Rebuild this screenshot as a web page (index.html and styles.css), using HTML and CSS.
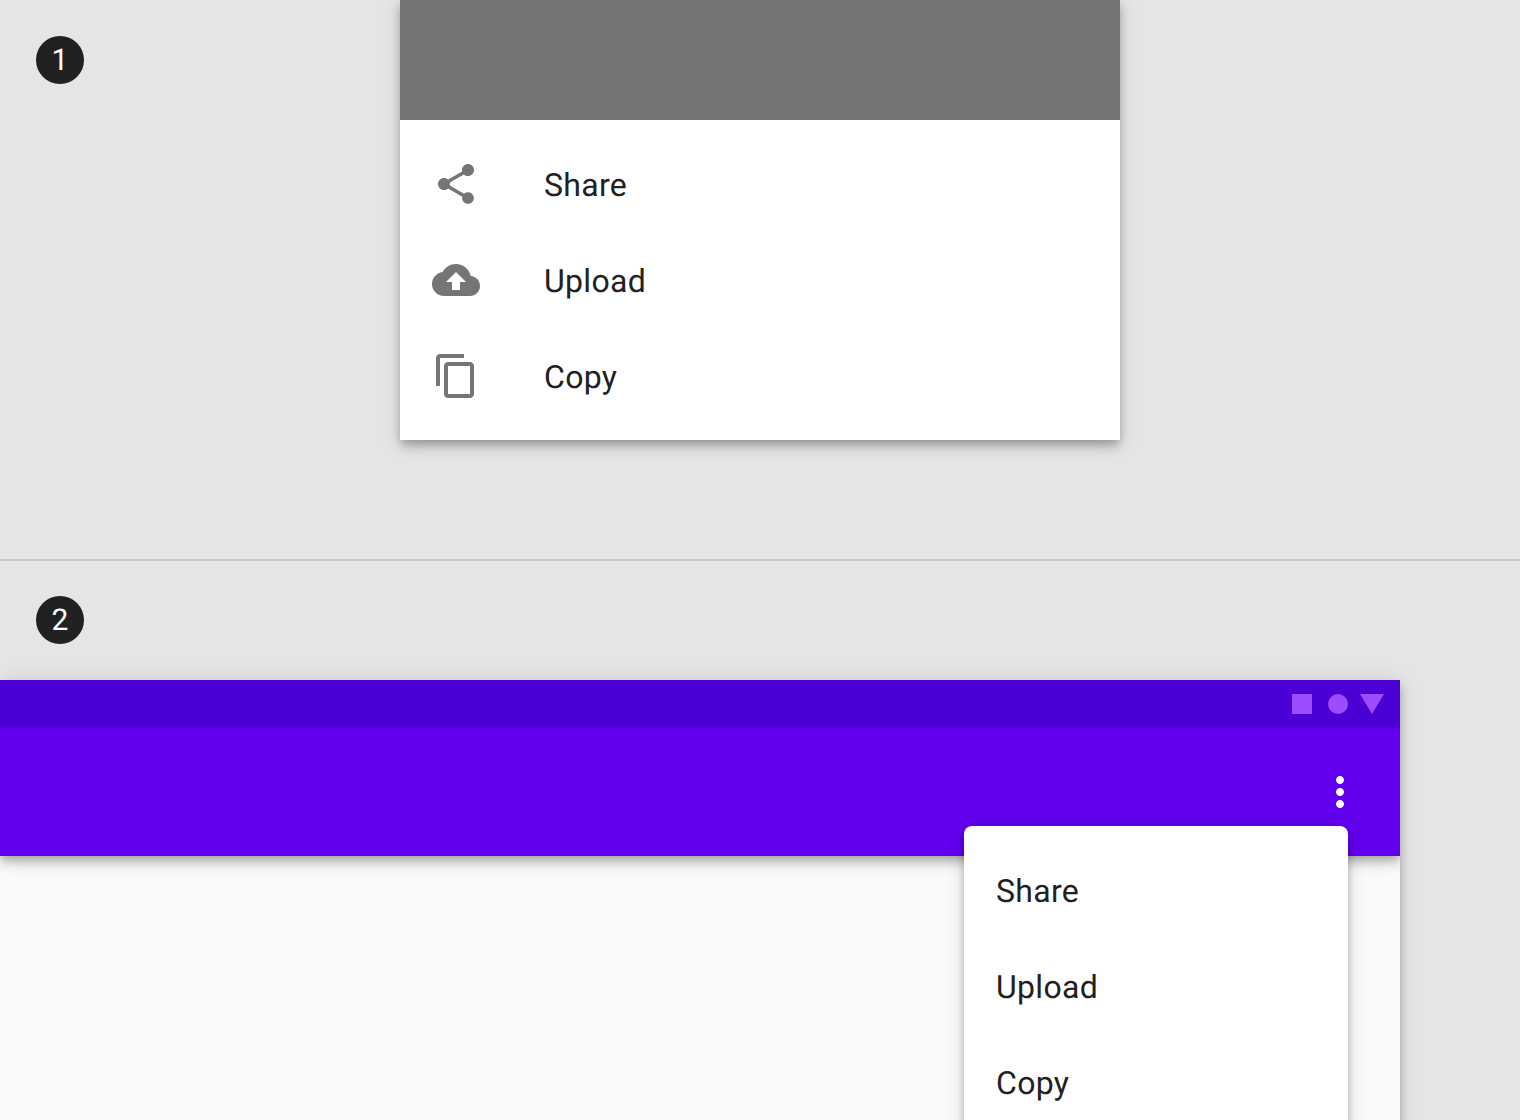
FILE: index.html
```html
<!DOCTYPE html>
<html lang="en">
<head>
<meta charset="utf-8">
<title>Menu</title>
<link rel="stylesheet" href="styles.css">
</head>
<body>
<main class="page">
  <section class="panel panel-one">
    <span class="badge">1</span>
    <div class="card">
      <div class="card-media"></div>
      <ul class="list">
        <li class="row">
          <svg class="icon" viewBox="0 0 24 24"><path d="M18 16.08c-.76 0-1.44.3-1.96.77L8.91 12.7c.05-.23.09-.46.09-.7s-.04-.47-.09-.7l7.05-4.11c.54.5 1.25.81 2.04.81 1.66 0 3-1.34 3-3s-1.34-3-3-3-3 1.34-3 3c0 .24.04.47.09.7L8.04 9.81C7.5 9.31 6.79 9 6 9c-1.66 0-3 1.34-3 3s1.34 3 3 3c.79 0 1.5-.31 2.04-.81l7.12 4.16c-.05.21-.08.43-.08.65 0 1.61 1.31 2.92 2.92 2.92 1.61 0 2.92-1.31 2.92-2.92s-1.31-2.92-2.92-2.92z"/></svg>
          <span class="label">Share</span>
        </li>
        <li class="row">
          <svg class="icon" viewBox="0 0 24 24"><path d="M19.35 10.04C18.67 6.59 15.64 4 12 4 9.11 4 6.6 5.64 5.35 8.04 2.34 8.36 0 10.91 0 14c0 3.31 2.69 6 6 6h13c2.76 0 5-2.24 5-5 0-2.64-2.05-4.78-4.65-4.96zM14 13v4h-4v-4H7l5-5 5 5h-3z"/></svg>
          <span class="label">Upload</span>
        </li>
        <li class="row">
          <svg class="icon" viewBox="0 0 24 24"><path d="M16 1H4c-1.1 0-2 .9-2 2v14h2V3h12V1zm3 4H8c-1.1 0-2 .9-2 2v14c0 1.1.9 2 2 2h11c1.1 0 2-.9 2-2V7c0-1.1-.9-2-2-2zm0 16H8V7h11v14z"/></svg>
          <span class="label">Copy</span>
        </li>
      </ul>
    </div>
  </section>
  <section class="panel panel-two">
    <span class="badge">2</span>
    <div class="device">
      <div class="status">
        <span class="st-square"></span>
        <span class="st-circle"></span>
        <svg class="st-triangle" viewBox="0 0 24 20"><path d="M0 0h24L12 20z"/></svg>
      </div>
      <div class="appbar">
        <svg class="more" viewBox="0 0 24 24"><path d="M12 8c1.1 0 2-.9 2-2s-.9-2-2-2-2 .9-2 2 .9 2 2 2zm0 2c-1.1 0-2 .9-2 2s.9 2 2 2 2-.9 2-2-.9-2-2-2zm0 6c-1.1 0-2 .9-2 2s.9 2 2 2 2-.9 2-2-.9-2-2-2z"/></svg>
      </div>
      <div class="content"></div>
      <ul class="menu">
        <li class="menu-item"><span class="label">Share</span></li>
        <li class="menu-item"><span class="label">Upload</span></li>
        <li class="menu-item"><span class="label">Copy</span></li>
      </ul>
    </div>
  </section>
</main>
</body>
</html>
```
FILE: styles.css
```css
* { box-sizing: border-box; }
html, body { margin: 0; padding: 0; }
body {
  width: 1520px;
  height: 1120px;
  overflow: hidden;
  background: #e5e5e5;
  font-family: Roboto, "Liberation Sans", sans-serif;
  color: #212121;
  text-rendering: geometricPrecision;
}
.page { display: flex; flex-direction: column; height: 1120px; }
ul { list-style: none; margin: 0; padding: 0; }

.panel { position: relative; }
.panel-one {
  height: 561px;
  display: flex;
  justify-content: center;
  border-bottom: 2px solid #c9c9c9;
}
.panel-two { flex: 1; min-height: 0; padding-top: 119px; overflow: hidden; }

.badge {
  position: absolute;
  left: 36px;
  top: 36px;
  width: 48px;
  height: 48px;
  border-radius: 50%;
  background: #212121;
  color: #fff;
  font-size: 30px;
  line-height: 50px;
  text-align: center;
}
.panel-two .badge { top: 35px; }

.card {
  width: 720px;
  height: 440px;
  background: #fff;
  box-shadow: 0 4px 8px -2px rgba(0, 0, 0, .2), 0 8px 10px rgba(0, 0, 0, .14), 0 2px 20px rgba(0, 0, 0, .12);
}
.card-media { height: 120px; background: #757575; }
.list { padding: 16px 0; }
.row { display: flex; align-items: center; height: 96px; padding-left: 32px; }
.icon { width: 48px; height: 48px; fill: #757575; flex: none; margin-right: 64px; }
.label { position: relative; top: 1px; font-size: 32px; line-height: 48px; letter-spacing: .32px; }

.device {
  position: relative;
  width: 1400px;
  height: 600px;
  display: flex;
  flex-direction: column;
  overflow: hidden;
  box-shadow: 0 4px 8px -2px rgba(0, 0, 0, .2), 0 8px 10px rgba(0, 0, 0, .14), 0 2px 20px rgba(0, 0, 0, .12);
}
.status {
  position: relative;
  z-index: 1;
  height: 48px;
  flex: none;
  display: flex;
  align-items: center;
  justify-content: flex-end;
  padding-right: 16px;
  background: #4b00d4;
}
.st-square { width: 20px; height: 20px; background: #9d4dff; margin-right: 16px; }
.st-circle { width: 20px; height: 20px; border-radius: 50%; background: #9d4dff; margin-right: 12px; }
.st-triangle { width: 24px; height: 20px; fill: #9d4dff; }
.appbar {
  position: relative;
  height: 128px;
  flex: none;
  display: flex;
  justify-content: flex-end;
  padding: 40px 36px 0 0;
  background: #6200ee;
  box-shadow: 0 4px 8px -2px rgba(0, 0, 0, .2), 0 8px 10px rgba(0, 0, 0, .14), 0 2px 20px rgba(0, 0, 0, .12);
}
.more { width: 48px; height: 48px; fill: #fff; }
.content { flex: 1; background: #fafafa; }
.menu {
  position: absolute;
  z-index: 2;
  left: 964px;
  top: 146px;
  width: 384px;
  padding: 16px 0;
  background: #fff;
  border-radius: 8px;
  box-shadow: 0 4px 8px -2px rgba(0, 0, 0, .2), 0 8px 10px rgba(0, 0, 0, .14), 0 2px 20px rgba(0, 0, 0, .12);
}
.menu-item { display: flex; align-items: center; height: 96px; padding-left: 32px; }
```
